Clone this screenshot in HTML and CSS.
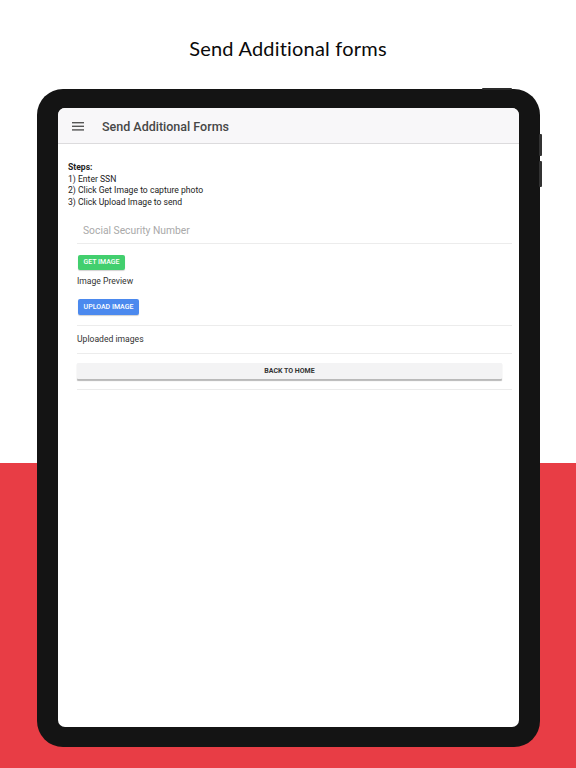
FILE: index.html
```html
<!DOCTYPE html>
<html>
<head>
<meta charset="utf-8">
<link rel="stylesheet" href="styles.css">
</head>
<body>
<div class="page">
  <h1 class="headline">Send Additional forms</h1>
  <div class="device">
    <span class="btn-top"></span>
    <span class="btn-side btn-side-1"></span>
    <span class="btn-side btn-side-2"></span>
    <div class="screen">
      <div class="appbar">
        <svg class="menu" width="12" height="9" viewBox="0 0 12 9"><rect x="0" y="0" width="12" height="1.4" fill="#555"/><rect x="0" y="3.6" width="12" height="1.4" fill="#555"/><rect x="0" y="7.2" width="12" height="1.4" fill="#555"/></svg>
        <span class="appbar-title">Send Additional Forms</span>
      </div>
      <div class="content">
        <div class="steps">
          <div class="steps-head">Steps:</div>
          <div>1) Enter SSN</div>
          <div>2) Click Get Image to capture photo</div>
          <div>3) Click Upload Image to send</div>
        </div>
        <div class="form">
          <div class="field"><span class="placeholder">Social Security Number</span></div>
          <div class="btn btn-green">GET IMAGE</div>
          <div class="label preview">Image Preview</div>
          <div class="btn btn-blue">UPLOAD IMAGE</div>
          <div class="divider d1"></div>
          <div class="label uploaded">Uploaded images</div>
          <div class="divider d2"></div>
          <div class="btn-home">BACK TO HOME</div>
          <div class="divider d3"></div>
        </div>
      </div>
    </div>
  </div>
</div>
</body>
</html>
```
FILE: styles.css
```css
* { box-sizing: border-box; }
html, body { margin: 0; padding: 0; }
body {
  width: 576px;
  height: 768px;
  overflow: hidden;
  background: linear-gradient(to bottom, #ffffff 0, #ffffff 463px, #e83d45 463px, #e83d45 100%);
  font-family: Roboto, "Liberation Sans", sans-serif;
}
.page {
  display: flex;
  flex-direction: column;
}
.headline {
  margin: 0;
  padding-top: 35px;
  height: 61px;
  line-height: 26px;
  font-family: "Lato", "DejaVu Sans", sans-serif;
  font-weight: 400;
  font-size: 20px;
  letter-spacing: 0.2px;
  text-align: center;
  color: #0a0a0a;
}
.device {
  position: relative;
  margin-top: 28px;
  margin-left: 37px;
  width: 503px;
  height: 658px;
  padding: 19px 21px 20px 21px;
  background: #141414;
  border-radius: 26px;
}
.btn-top {
  position: absolute;
  top: -1px;
  right: 28px;
  width: 30px;
  height: 2px;
  background: #2a2a2a;
  border-radius: 1px;
}
.btn-side {
  position: absolute;
  right: -2px;
  width: 3px;
  background: #333;
  border-radius: 1px;
}
.btn-side-1 { top: 45px; height: 22px; }
.btn-side-2 { top: 72px; height: 26px; }
.screen {
  width: 100%;
  height: 100%;
  background: #fff;
  border-radius: 7px;
  overflow: hidden;
  display: flex;
  flex-direction: column;
}
.appbar {
  height: 36px;
  flex: none;
  background: #f8f7f9;
  border-bottom: 1px solid #dcdbdd;
  display: flex;
  align-items: center;
  padding-left: 14px;
  padding-top: 1px;
}
.menu { display: block; }
.appbar-title {
  margin-left: 18px;
  font-size: 12.5px;
  font-weight: 500;
  color: #474747;
}
.content {
  padding: 18px 7px 0 10px;
}
.steps {
  font-size: 8.6px;
  line-height: 11.7px;
  color: #222;
}
.steps-head { font-weight: 700; }
.form {
  margin-left: 9px;
  display: flex;
  flex-direction: column;
  align-items: flex-start;
}
.field {
  align-self: stretch;
  height: 35px;
  border-bottom: 1.5px solid #ececec;
  display: flex;
  align-items: center;
  padding-left: 6px;
  padding-top: 10px;
}
.placeholder {
  font-size: 10.3px;
  color: #a9a9a9;
}
.btn {
  margin-left: 1px;
  height: 15px;
  border-radius: 2px;
  color: #fff;
  font-size: 7px;
  font-weight: 500;
  display: flex;
  align-items: center;
  justify-content: center;
  box-shadow: 0 1px 1px rgba(0,0,0,0.18);
}
.btn-green {
  margin-top: 11px;
  width: 47px;
  background: #42cf6e;
}
.btn-blue {
  margin-top: 12px;
  height: 16px;
  width: 61px;
  background: #4b89ee;
}
.label {
  font-size: 8.6px;
  color: #333;
  line-height: 12px;
}
.preview { margin-top: 5px; }
.divider {
  align-self: stretch;
  height: 1px;
  background: #ececec;
}
.d1 { margin-top: 10px; }
.uploaded { margin-top: 7px; }
.d2 { margin-top: 8px; }
.btn-home {
  margin-top: 9px;
  align-self: stretch;
  margin-right: 10px;
  height: 16px;
  background: #f3f3f4;
  border-radius: 1px;
  box-shadow: 0 1.5px 1px #b9b9b9;
  font-size: 7px;
  font-weight: 700;
  color: #333;
  display: flex;
  align-items: center;
  justify-content: center;
}
.d3 { margin-top: 10px; }
```
